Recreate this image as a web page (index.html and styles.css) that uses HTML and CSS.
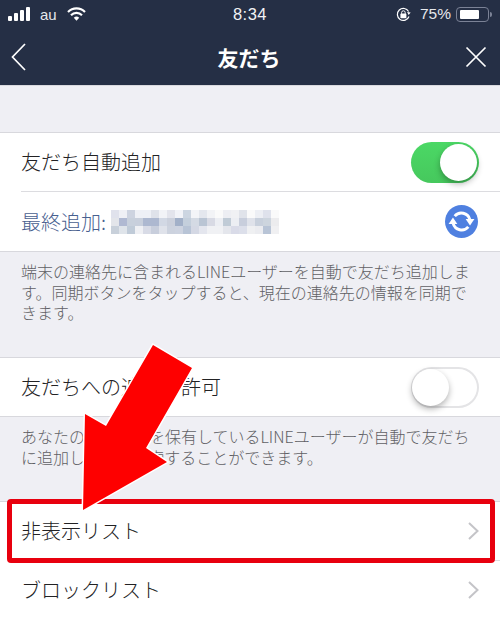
FILE: index.html
```html
<!DOCTYPE html>
<html lang="ja">
<head>
<meta charset="utf-8">
<title>友だち</title>
<link rel="stylesheet" href="styles.css">
</head>
<body>
<div class="page">
  <header class="header">
    <div class="status">
      <div class="status-left">
        <svg class="signal" width="23" height="14" viewBox="0 0 23 14"><rect x="0" y="9" width="4" height="5" rx="1"/><rect x="6" y="6" width="4" height="8" rx="1"/><rect x="12" y="3" width="4" height="11" rx="1"/><rect x="18" y="0" width="4" height="14" rx="1"/></svg>
        <span class="carrier">au</span>
        <svg class="wifi" width="19" height="14" viewBox="0 0 19 14"><path d="M1 5a12 12 0 0 1 17 0" /><path d="M4 8.2a7.8 7.8 0 0 1 11 0"/><path d="M9.5 13.8l-2.7-3a3.8 3.8 0 0 1 5.4 0z" class="wifi-dot"/></svg>
      </div>
      <div class="time">8:34</div>
      <div class="status-right">
        <svg class="lock" width="15" height="15" viewBox="0 0 15 15"><path d="M13 9.5A6 6 0 1 1 12.6 4.5" fill="none" stroke="#fff" stroke-width="1.2"/><path d="M11 5.2h3.6L12.9 8z" fill="#fff" transform="rotate(8 12.8 6)"/><rect x="4.4" y="6.6" width="6" height="4.6" rx="0.8" fill="#fff"/><path d="M5.6 6.8V5.6a1.8 1.8 0 0 1 3.6 0v1.2" fill="none" stroke="#fff" stroke-width="1"/></svg>
        <span class="percent">75%</span>
        <div class="battery"><div class="battery-level"></div></div>
        <div class="battery-nub"></div>
      </div>
    </div>
    <nav class="nav">
      <svg class="nav-icon back" width="15" height="28" viewBox="0 0 15 28"><path d="M14 1L1.500 14 14 27"/></svg>
      <h1 class="title">友だち</h1>
      <svg class="nav-icon close" width="22" height="22" viewBox="0 0 22 22"><path d="M1.500 1.500l19 19M20.500 1.500l-19 19"/></svg>
    </nav>
  </header>

  <section class="group first">
    <div class="row">
      <span class="label">友だち自動追加</span>
      <div class="toggle on"><div class="knob"></div></div>
    </div>
    <div class="row">
      <span class="label sync-label">最終追加:</span>
      <svg class="mosaic" width="168" height="24" viewBox="0 0 21 3" shape-rendering="crispEdges">
        <g>
          <rect x="0" y="0" width="1" height="1" fill="#e0e2ec"/><rect x="1" y="0" width="1" height="1" fill="#eff0f5"/><rect x="2" y="0" width="1" height="1" fill="#cdd3e0"/><rect x="3" y="0" width="2" height="1" fill="#eef0f6"/><rect x="5" y="0" width="1" height="1" fill="#dfe2ea"/><rect x="6" y="0" width="1" height="1" fill="#f2f3f7"/><rect x="7" y="0" width="1" height="1" fill="#e3e4ec"/><rect x="8" y="0" width="1" height="1" fill="#f2f3f8"/><rect x="9" y="0" width="1" height="1" fill="#ccd5e1"/><rect x="10" y="0" width="1" height="1" fill="#f3f4f8"/><rect x="11" y="0" width="1" height="1" fill="#e4e7ee"/><rect x="12" y="0" width="1" height="1" fill="#f2f3f6"/><rect x="13" y="0" width="1" height="1" fill="#fafafa"/><rect x="14" y="0" width="1" height="1" fill="#edeef3"/><rect x="15" y="0" width="1" height="1" fill="#f0f1f4"/><rect x="16" y="0" width="1" height="1" fill="#e0e3ea"/><rect x="17" y="0" width="1" height="1" fill="#fafafa"/><rect x="18" y="0" width="1" height="1" fill="#edeff4"/><rect x="19" y="0" width="1" height="1" fill="#dfe2ec"/><rect x="20" y="0" width="1" height="1" fill="#fafafa"/>
          <rect x="0" y="1" width="1" height="1" fill="#e3e5ea"/><rect x="1" y="1" width="1" height="1" fill="#b0b9d2"/><rect x="2" y="1" width="1" height="1" fill="#c8d0dc"/><rect x="3" y="1" width="1" height="1" fill="#c8cfdc"/><rect x="4" y="1" width="2" height="1" fill="#adb8d0"/><rect x="6" y="1" width="1" height="1" fill="#d2d8e4"/><rect x="7" y="1" width="1" height="1" fill="#cbd0dc"/><rect x="8" y="1" width="1" height="1" fill="#a2b0c8"/><rect x="9" y="1" width="1" height="1" fill="#c4cfdc"/><rect x="10" y="1" width="1" height="1" fill="#d4dae4"/><rect x="11" y="1" width="1" height="1" fill="#bac5d4"/><rect x="12" y="1" width="1" height="1" fill="#d8dae4"/><rect x="13" y="1" width="1" height="1" fill="#eceef3"/><rect x="14" y="1" width="1" height="1" fill="#c0cbd6"/><rect x="15" y="1" width="1" height="1" fill="#eceef3"/><rect x="16" y="1" width="1" height="1" fill="#c8cedc"/><rect x="17" y="1" width="1" height="1" fill="#dfe2ea"/><rect x="18" y="1" width="1" height="1" fill="#c8d0dc"/><rect x="19" y="1" width="1" height="1" fill="#cdd5de"/><rect x="20" y="1" width="1" height="1" fill="#ececee"/>
          <rect x="0" y="2" width="1" height="1" fill="#c8d0da"/><rect x="1" y="2" width="1" height="1" fill="#dfe4ea"/><rect x="2" y="2" width="1" height="1" fill="#c0cbd8"/><rect x="3" y="2" width="1" height="1" fill="#eff0f4"/><rect x="4" y="2" width="1" height="1" fill="#d8dbe6"/><rect x="5" y="2" width="1" height="1" fill="#c8cedc"/><rect x="6" y="2" width="1" height="1" fill="#dfe2ea"/><rect x="7" y="2" width="1" height="1" fill="#ccd2de"/><rect x="8" y="2" width="1" height="1" fill="#cdd3e0"/><rect x="9" y="2" width="1" height="1" fill="#b8c4d6"/><rect x="10" y="2" width="1" height="1" fill="#d4d8e4"/><rect x="11" y="2" width="1" height="1" fill="#e4e6ee"/><rect x="12" y="2" width="1" height="1" fill="#f0f1f4"/><rect x="13" y="2" width="1" height="1" fill="#f0f1f4"/><rect x="14" y="2" width="1" height="1" fill="#e4e6ec"/><rect x="15" y="2" width="1" height="1" fill="#d9dbe8"/><rect x="16" y="2" width="1" height="1" fill="#dcdfea"/><rect x="17" y="2" width="1" height="1" fill="#eff0f2"/><rect x="18" y="2" width="1" height="1" fill="#ebecf0"/><rect x="19" y="2" width="1" height="1" fill="#b8c4d6"/><rect x="20" y="2" width="1" height="1" fill="#f0f0f2"/>
        </g>
      </svg>
      <svg class="sync" width="33" height="33" viewBox="0 0 34 34">
        <circle cx="17" cy="17" r="17" fill="#4f80e0"/>
        <path d="M10 11.500A9 9 0 0 1 25.600 15" fill="none" stroke="#fff" stroke-width="3"/>
        <path d="M21.300 14.500h9l-4.500 6.500z" fill="#fff"/>
        <path d="M24 22.500A9 9 0 0 1 8.400 19" fill="none" stroke="#fff" stroke-width="3"/>
        <path d="M12.700 19.500h-9l4.500-6.500z" fill="#fff"/>
      </svg>
    </div>
  </section>
  <p class="desc desc-long">端末の連絡先に含まれるLINEユーザーを自動で友だち追加します。同期ボタンをタップすると、現在の連絡先の情報を同期できます。</p>

  <section class="group">
    <div class="row">
      <span class="label">友だちへの追加を許可</span>
      <div class="toggle off"><div class="knob"></div></div>
    </div>
  </section>
  <p class="desc">あなたの電話番号を保有しているLINEユーザーが自動で友だちに追加したり、検索することができます。</p>

  <section class="group">
    <div class="row">
      <span class="label">非表示リスト</span>
      <svg class="chevron" width="11" height="18" viewBox="0 0 11 18"><path d="M1 1l8.500 8L1 17"/></svg>
    </div>
    <div class="row">
      <span class="label">ブロックリスト</span>
      <svg class="chevron" width="11" height="18" viewBox="0 0 11 18"><path d="M1 1l8.500 8L1 17"/></svg>
    </div>
  </section>

  <div class="highlight"></div>
  <svg class="arrow" width="140" height="190" viewBox="70 335 140 190">
    <polygon points="153,345 192,368 146,448 167,462 83,510 85,414 106,426"/>
  </svg>
</div>
</body>
</html>
```
FILE: styles.css
```css
* { box-sizing: border-box; }
html, body { margin: 0; padding: 0; }
body {
  width: 500px;
  height: 618px;
  overflow: hidden;
  background: #efeff4;
  font-family: "Noto Sans CJK JP", "Noto Sans", sans-serif;
}
.page { position: relative; width: 500px; height: 618px; overflow: hidden; }

.header { height: 86px; background: #252f45; color: #fff; border-bottom: 1px solid #d9d9de; }
.status {
  display: grid;
  grid-template-columns: 1fr auto 1fr;
  align-items: center;
  height: 28px;
  padding: 0 8px;
  font-family: "Liberation Sans", Arial, sans-serif;
}
.status-left { display: flex; align-items: center; }
.signal { fill: #fff; }
.carrier { margin-left: 9px; font-size: 15px; color: #e6e8ec; }
.wifi { margin-left: 10px; fill: none; stroke: #fff; stroke-width: 2.2; }
.wifi-dot { fill: #fff; stroke: none; }
.time { font-size: 16.5px; letter-spacing: 0.5px; color: #f2f3f5; }
.status-right { display: flex; align-items: center; justify-content: flex-end; }
.lock { margin-right: 9px; }
.percent { font-size: 15.5px; color: #e6e8ec; margin-right: 5px; }
.battery {
  width: 33px;
  height: 15px;
  padding: 2px 9px 2px 3px;
  border: 1px solid #7b8296;
  border-radius: 4px;
}
.battery-level { height: 100%; background: #fff; border-radius: 1px; }
.battery-nub { width: 2px; height: 5px; margin-left: 1px; background: #7b8296; border-radius: 0 2px 2px 0; }

.nav {
  display: grid;
  grid-template-columns: 1fr auto 1fr;
  align-items: center;
  height: 57px;
  padding: 0 13px 0 11px;
}
.nav-icon { fill: none; stroke: #fff; stroke-width: 1.7; }
.close { justify-self: end; }
.title {
  margin: 0;
  font-size: 21px;
  font-weight: 700;
  line-height: 28px;
}

.group {
  margin: 0;
  background: #fff;
  border-top: 1px solid #d8d8dd;
  border-bottom: 1px solid #d8d8dd;
}
.first { margin-top: 46px; }
.row {
  display: flex;
  align-items: center;
  height: 59px;
  margin-left: 21px;
  padding-right: 21px;
  border-bottom: 1px solid #dcdce0;
}
.row:last-child { height: 58px; border-bottom: none; }
.first .row:last-child { height: 59px; }
.label {
  font-size: 20px;
  font-weight: 300;
  line-height: 26px;
  color: #222224;
}
.sync-label { color: #48608f; }
.mosaic { margin-left: 5px; filter: blur(0.5px); }
.sync { margin-left: auto; margin-right: 1px; }
.toggle {
  position: relative;
  width: 68px;
  height: 41px;
  margin-left: auto;
  border-radius: 21px;
}
.toggle.on { background: linear-gradient(#4bd865, #46c85d); }
.toggle.off { background: #fff; box-shadow: inset 0 0 0 2px #e4e4e6; }
.knob {
  position: absolute;
  top: 2px;
  width: 37px;
  height: 37px;
  border-radius: 50%;
  background: #fff;
  box-shadow: 0 3px 6px rgba(0, 0, 0, 0.3);
}
.on .knob { right: 2px; }
.off .knob { left: 1px; }
.chevron { margin-left: auto; fill: none; stroke: #c4c4c8; stroke-width: 2; }

.desc {
  margin: 0;
  padding: 9px 21px 34px;
  font-size: 16px;
  font-weight: 300;
  line-height: 20.5px;
  color: #5f5f64;
}
.desc-long { padding-bottom: 34.5px; }

.highlight {
  position: absolute;
  left: 7px;
  top: 499px;
  width: 488px;
  height: 64px;
  border: 5px solid #e8000e;
  border-radius: 4px;
}
.arrow { position: absolute; left: 70px; top: 335px; overflow: visible; }
.arrow polygon {
  fill: #fe0000;
  stroke: #fff;
  stroke-width: 3;
  stroke-linejoin: miter;
  paint-order: stroke;
}
```
